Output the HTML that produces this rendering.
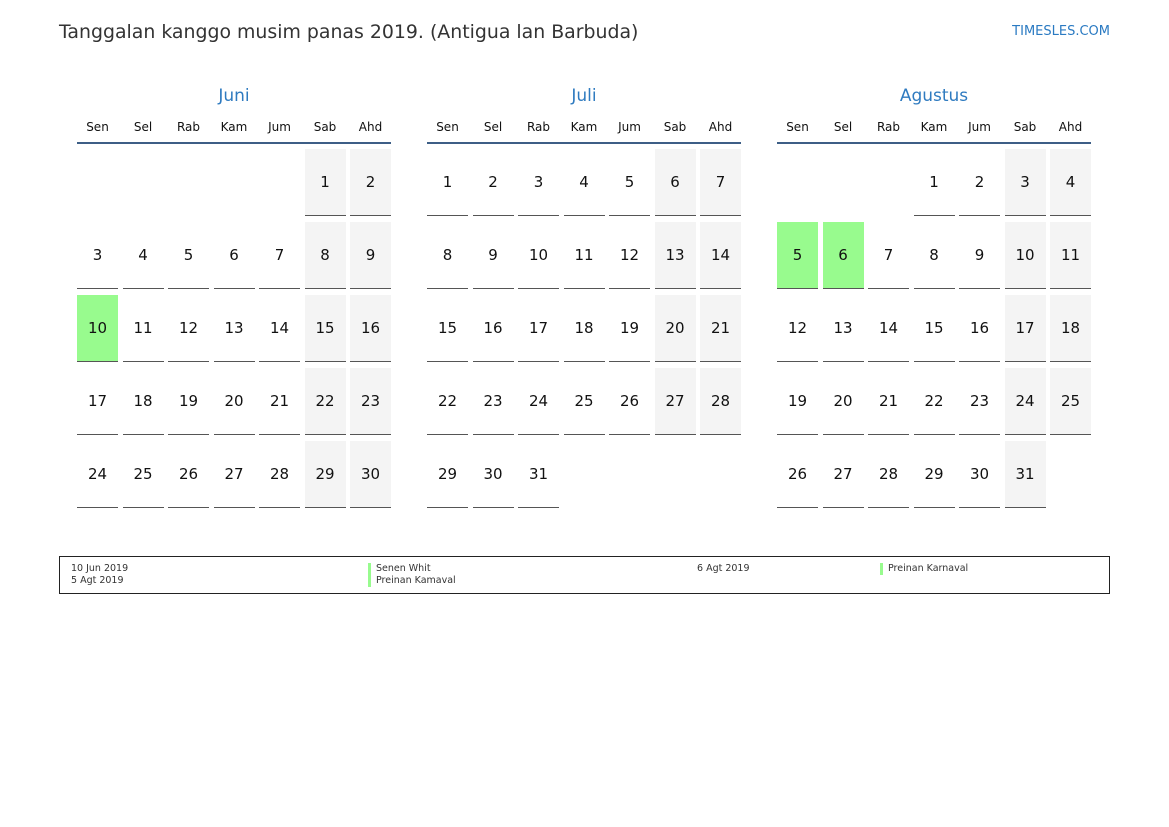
<!DOCTYPE html>
<html><head><meta charset="utf-8"><style>
*{margin:0;padding:0;box-sizing:border-box}
body{width:1169px;height:827px;background:#fff;font-family:"DejaVu Sans","Liberation Sans",sans-serif;color:#111;position:relative;overflow:hidden}
.t{position:absolute;left:59px;top:21px;font-size:18.9px;color:#333}
.l{position:absolute;right:59px;top:24px;font-size:13px;color:#2a7ac2}
.m{position:absolute;top:85px;width:314px}
.mt{text-align:center;font-size:17px;color:#2f7bc0;height:28px;line-height:22px}
.dn{display:grid;grid-template-columns:repeat(7,41px);column-gap:4.5px;font-size:12px;text-align:center;height:31px;line-height:28px;border-bottom:2px solid #3d5e86}
.g{display:grid;grid-template-columns:repeat(7,41px);column-gap:4.5px;row-gap:6px;margin-top:5px}
.g i{font-style:normal;display:block;height:67px;line-height:66px;text-align:center;font-size:15px;border-bottom:1px solid #555}
.g i.w{background:#f4f4f4}
.g i.h{background:#98fb8e}
.g i.e{border:0;background:none}
.lg{position:absolute;left:59px;top:556px;width:1051px;height:38px;border:1px solid #222;font-size:9.5px;color:#333}
.lg div{position:absolute;line-height:12px}
.b{border-left:3px solid #98fb8e;padding-left:5px}
</style></head><body>
<div class="t">Tanggalan kanggo musim panas 2019. (Antigua lan Barbuda)</div>
<div class="l">TIMESLES.COM</div>

<div class="m" style="left:77px"><div class="mt">Juni</div>
<div class="dn"><span>Sen</span><span>Sel</span><span>Rab</span><span>Kam</span><span>Jum</span><span>Sab</span><span>Ahd</span></div>
<div class="g">
<i class="e"></i><i class="e"></i><i class="e"></i><i class="e"></i><i class="e"></i><i class="w">1</i><i class="w">2</i>
<i>3</i><i>4</i><i>5</i><i>6</i><i>7</i><i class="w">8</i><i class="w">9</i>
<i class="h">10</i><i>11</i><i>12</i><i>13</i><i>14</i><i class="w">15</i><i class="w">16</i>
<i>17</i><i>18</i><i>19</i><i>20</i><i>21</i><i class="w">22</i><i class="w">23</i>
<i>24</i><i>25</i><i>26</i><i>27</i><i>28</i><i class="w">29</i><i class="w">30</i>
</div></div>

<div class="m" style="left:427px"><div class="mt">Juli</div>
<div class="dn"><span>Sen</span><span>Sel</span><span>Rab</span><span>Kam</span><span>Jum</span><span>Sab</span><span>Ahd</span></div>
<div class="g">
<i>1</i><i>2</i><i>3</i><i>4</i><i>5</i><i class="w">6</i><i class="w">7</i>
<i>8</i><i>9</i><i>10</i><i>11</i><i>12</i><i class="w">13</i><i class="w">14</i>
<i>15</i><i>16</i><i>17</i><i>18</i><i>19</i><i class="w">20</i><i class="w">21</i>
<i>22</i><i>23</i><i>24</i><i>25</i><i>26</i><i class="w">27</i><i class="w">28</i>
<i>29</i><i>30</i><i>31</i>
</div></div>

<div class="m" style="left:777px"><div class="mt">Agustus</div>
<div class="dn"><span>Sen</span><span>Sel</span><span>Rab</span><span>Kam</span><span>Jum</span><span>Sab</span><span>Ahd</span></div>
<div class="g">
<i class="e"></i><i class="e"></i><i class="e"></i><i>1</i><i>2</i><i class="w">3</i><i class="w">4</i>
<i class="h">5</i><i class="h">6</i><i>7</i><i>8</i><i>9</i><i class="w">10</i><i class="w">11</i>
<i>12</i><i>13</i><i>14</i><i>15</i><i>16</i><i class="w">17</i><i class="w">18</i>
<i>19</i><i>20</i><i>21</i><i>22</i><i>23</i><i class="w">24</i><i class="w">25</i>
<i>26</i><i>27</i><i>28</i><i>29</i><i>30</i><i class="w">31</i>
</div></div>

<div class="lg">
<div style="left:11px;top:6px">10 Jun 2019<br>5 Agt 2019</div>
<div style="left:308px;top:6px"><div class="b" style="position:static">Senen Whit</div><div class="b" style="position:static">Preinan Kamaval</div></div>
<div style="left:637px;top:6px">6 Agt 2019</div>
<div class="b" style="left:820px;top:6px">Preinan Karnaval</div>
</div>
</body></html>
